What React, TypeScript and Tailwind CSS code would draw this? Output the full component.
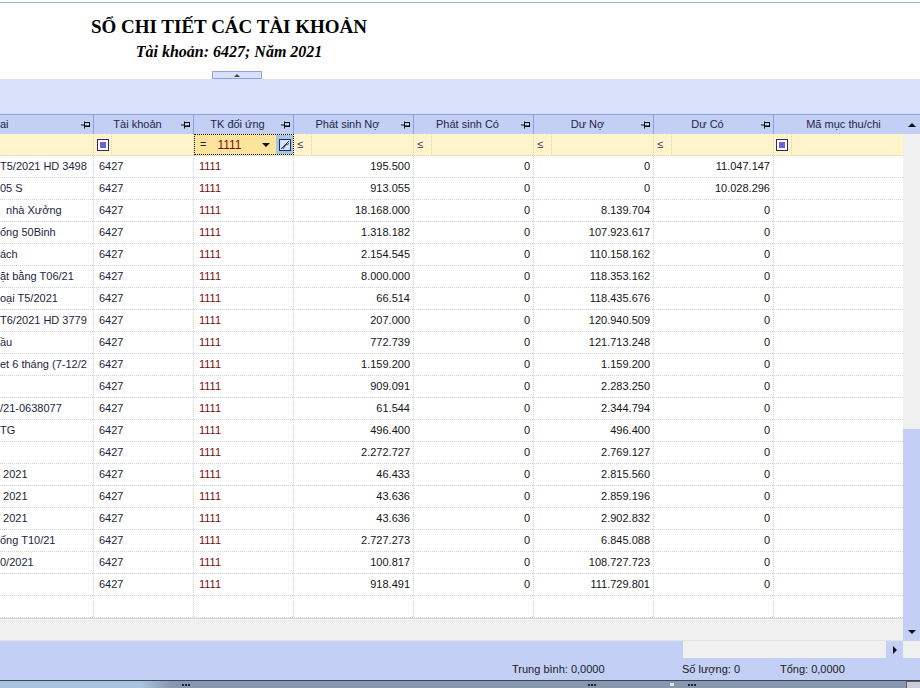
import React from 'react'

type Line = [string, string, string, string, string]

const rows: Line[] = [
  ['T5/2021 HD 3498', '195.500', '0', '0', '11.047.147'],
  ['05 S', '913.055', '0', '0', '10.028.296'],
  ['  nhà Xưởng', '18.168.000', '0', '8.139.704', '0'],
  ['ống 50Binh', '1.318.182', '0', '107.923.617', '0'],
  ['ách', '2.154.545', '0', '110.158.162', '0'],
  ['ặt bằng T06/21', '8.000.000', '0', '118.353.162', '0'],
  ['oại T5/2021', '66.514', '0', '118.435.676', '0'],
  ['T6/2021 HD 3779', '207.000', '0', '120.940.509', '0'],
  ['ầu', '772.739', '0', '121.713.248', '0'],
  ['et 6 tháng (7-12/2', '1.159.200', '0', '1.159.200', '0'],
  ['', '909.091', '0', '2.283.250', '0'],
  ['/21-0638077', '61.544', '0', '2.344.794', '0'],
  ['TG', '496.400', '0', '496.400', '0'],
  ['', '2.272.727', '0', '2.769.127', '0'],
  [' 2021', '46.433', '0', '2.815.560', '0'],
  [' 2021', '43.636', '0', '2.859.196', '0'],
  [' 2021', '43.636', '0', '2.902.832', '0'],
  ['ống T10/21', '2.727.273', '0', '6.845.088', '0'],
  ['0/2021', '100.817', '0', '108.727.723', '0'],
  ['', '918.491', '0', '111.729.801', '0'],
]

function PinIcon() {
  return (
    <svg width="10" height="8" viewBox="0 0 10 8" className="shrink-0">
      <path d="M0 4H3M3.5 0.5V7.5" stroke="#111" strokeWidth="1" fill="none" />
      <rect x="3.5" y="1.5" width="5" height="4" stroke="#111" strokeWidth="1" fill="none" />
      <path d="M4 5H9" stroke="#111" strokeWidth="1.2" />
    </svg>
  )
}

function CheckIcon() {
  return (
    <div className="w-[12px] h-[12px] border border-[#2a2a6a] bg-white p-[2px]">
      <div className="w-full h-full bg-[#6a62d6]" />
    </div>
  )
}

function ClearFilterIcon() {
  return (
    <svg width="12" height="12" viewBox="0 0 12 12">
      <rect x="0.5" y="0.5" width="11" height="11" fill="#d6e4f6" stroke="#1e2a6a" />
      <path d="M2 10L10 2" stroke="#1e2a6a" strokeWidth="1" />
      <path d="M4 10Q6 5 10 4.5" stroke="#1e2a6a" strokeWidth="1" fill="none" />
    </svg>
  )
}

function Tri({ dir }: { dir: 'up' | 'down' | 'right' }) {
  if (dir === 'up') return <div className="w-0 h-0 border-x-[4px] border-x-transparent border-b-[4px] border-b-[#111]" />
  if (dir === 'down') return <div className="w-0 h-0 border-x-[4px] border-x-transparent border-t-[4px] border-t-[#111]" />
  return <div className="w-0 h-0 border-y-[4px] border-y-transparent border-l-[4px] border-l-[#111]" />
}

function Grip() {
  return (
    <div className="flex gap-[1px]">
      <div className="w-[2px] h-[2px] bg-[#1c2230]" />
      <div className="w-[2px] h-[2px] bg-[#1c2230]" />
      <div className="w-[2px] h-[2px] bg-[#1c2230]" />
    </div>
  )
}

const dot = 'border-r border-dotted border-[#d3d3d3]'

function HeadCell({ w, label, pin = true, extra = '' }: { w: string; label: string; pin?: boolean; extra?: string }) {
  return (
    <div className={`${w} shrink-0 flex items-center border-r border-[#8da1e3] pr-[2px] ${extra}`}>
      <span className="flex-1 text-center whitespace-nowrap">{label}</span>
      {pin && <PinIcon />}
    </div>
  )
}

function OpCell({ w }: { w: string }) {
  return (
    <div className={`${w} shrink-0 flex border-r border-dotted border-[#dcd6bc]`}>
      <div className="w-[18px] flex items-center pl-[3px] text-[#2b2b6b] border-r border-dotted border-[#dcd6bc]">≤</div>
    </div>
  )
}

function DataRow({ line }: { line?: Line }) {
  const [desc, ps, co, no, dc] = line ?? ['', '', '', '', '']
  const has = !!line
  return (
    <div className="flex h-[22px] border-b border-dotted border-[#d3d3d3]">
      <div className={`w-[94px] shrink-0 overflow-hidden whitespace-pre flex items-center text-[#1c1f3e] ${dot}`}>{desc}</div>
      <div className={`w-[100px] shrink-0 flex items-center pl-[5px] text-[#1c1f3e] ${dot}`}>{has ? '6427' : ''}</div>
      <div className={`w-[100px] shrink-0 flex items-center pl-[5px] text-[#7d0a0a] ${dot}`}>{has ? '1111' : ''}</div>
      <div className={`w-[120px] shrink-0 flex items-center justify-end pr-[3px] text-[#141414] ${dot}`}>{ps}</div>
      <div className={`w-[120px] shrink-0 flex items-center justify-end pr-[3px] text-[#141414] ${dot}`}>{co}</div>
      <div className={`w-[120px] shrink-0 flex items-center justify-end pr-[3px] text-[#141414] ${dot}`}>{no}</div>
      <div className={`w-[120px] shrink-0 flex items-center justify-end pr-[3px] text-[#141414] ${dot}`}>{dc}</div>
      <div className="flex-1" />
    </div>
  )
}

export default function App() {
  return (
    <div className="w-[920px] h-[688px] overflow-hidden bg-white flex flex-col font-['Liberation_Sans',Arial,sans-serif] text-[11px] leading-none">
      <div className="h-[2px] shrink-0" />
      <div className="h-px shrink-0 bg-[#9eafe8]" />

      <div className="h-[68px] shrink-0 w-[458px] pt-[12px] text-center text-black font-['Liberation_Serif','Times_New_Roman',serif]">
        <div className="text-[19px] leading-[24px] font-bold">SỔ CHI TIẾT CÁC TÀI KHOẢN</div>
        <div className="mt-[3px] text-[16px] leading-[20px] font-bold italic">Tài khoản: 6427; Năm 2021</div>
      </div>

      <div className="h-[8px] shrink-0 flex">
        <div className="ml-[212px] w-[50px] h-[8px] border border-[#8ea2e4] bg-[#d9e1f9] flex items-center justify-center">
          <div className="w-0 h-0 border-x-[3px] border-x-transparent border-b-[3px] border-b-[#444]" />
        </div>
      </div>

      <div className="h-[35px] shrink-0 bg-[#d9e1fa]" />

      <div className="h-[527px] shrink-0 flex">
        <div className="w-[903px] shrink-0 flex flex-col">
          <div className="flex h-[20px] shrink-0 border-t border-[#8da1e3] bg-[#c3cff5] text-[#1f1f4d]">
            <div className="w-[94px] shrink-0 flex items-center border-r border-[#8da1e3] pr-[2px]">
              <span className="flex-1">ai</span>
              <PinIcon />
            </div>
            <HeadCell w="w-[100px]" label="Tài khoản" />
            <HeadCell w="w-[100px]" label="TK đối ứng" />
            <HeadCell w="w-[120px]" label="Phát sinh Nợ" />
            <HeadCell w="w-[120px]" label="Phát sinh Có" />
            <HeadCell w="w-[120px]" label="Dư Nợ" />
            <HeadCell w="w-[120px]" label="Dư Có" />
            <div className="flex-1 flex items-center pl-[10px]">
              <span className="flex-1 text-center whitespace-nowrap">Mã mục thu/chi</span>
            </div>
          </div>

          <div className="flex h-[22px] shrink-0 bg-[#fff4cc] border-b border-dotted border-[#d8d3bd]">
            <div className="w-[94px] shrink-0 border-r border-dotted border-[#dcd6bc]" />
            <div className="w-[100px] shrink-0 flex border-r border-dotted border-[#dcd6bc]">
              <div className="w-[18px] flex items-center pl-[3px] border-r border-dotted border-[#dcd6bc]">
                <CheckIcon />
              </div>
            </div>
            <div className="w-[100px] shrink-0 flex items-stretch border border-dotted border-[#111] bg-[#fde49c]">
              <span className="flex items-center pl-[5px] text-[#222]">=</span>
              <span className="flex items-center pl-[11px] text-[#7d0a0a] text-[12px]">1111</span>
              <div className="flex-1 flex items-center justify-end pr-[6px]">
                <Tri dir="down" />
              </div>
              <div className="w-[17px] bg-[#a8c4e6] flex items-center justify-center">
                <ClearFilterIcon />
              </div>
            </div>
            <OpCell w="w-[120px]" />
            <OpCell w="w-[120px]" />
            <OpCell w="w-[120px]" />
            <OpCell w="w-[120px]" />
            <div className="flex-1 flex">
              <div className="w-[18px] flex items-center pl-[2px] border-r border-dotted border-[#dcd6bc]">
                <CheckIcon />
              </div>
            </div>
          </div>

          {rows.map((r, i) => (
            <DataRow key={i} line={r} />
          ))}
          <DataRow />

          <div className="flex-1 bg-[#f0f0f0] border-t border-[#dadada] border-b border-b-[#e2e2e2]" />
        </div>

        <div className="w-[17px] shrink-0 flex flex-col">
          <div className="h-[20px] shrink-0 bg-[#c3cff5] border-t border-[#8da1e3] flex items-center justify-center">
            <Tri dir="up" />
          </div>
          <div className="h-[295px] shrink-0 bg-[#f0f0f0]" />
          <div className="h-[194px] shrink-0 bg-[#c3cff5]" />
          <div className="flex-1 bg-[#c3cff5] flex items-center justify-center">
            <Tri dir="down" />
          </div>
        </div>
      </div>

      <div className="h-[17px] shrink-0 flex">
        <div className="w-[683px] shrink-0 bg-[#c3cff5]" />
        <div className="w-[203px] shrink-0 bg-[#f0f0f0]" />
        <div className="w-[17px] shrink-0 bg-[#c3cff5] flex items-center justify-center">
          <Tri dir="right" />
        </div>
        <div className="flex-1 bg-[#f0f0f0]" />
      </div>

      <div className="h-[22px] shrink-0 bg-[#c3cff5] flex items-center pl-[512px] text-[#1a1a1a] whitespace-nowrap">
        <span className="w-[170px] shrink-0">Trung bình: 0,0000</span>
        <span className="w-[98px] shrink-0">Số lượng: 0</span>
        <span>Tổng: 0,0000</span>
      </div>

      <div className="h-px shrink-0 bg-[#3d4554]" />
      <div className="h-[7px] shrink-0 flex items-center bg-[linear-gradient(to_right,#aac3df_0px,#aac3df_140px,#8797af_172px,#8797af_100%)]">
        <div className="ml-[182px]"><Grip /></div>
        <div className="ml-[398px]"><Grip /></div>
        <div className="ml-[74px] w-[4px] h-[3px] bg-[#dfe6f0]" />
        <div className="ml-[14px]"><Grip /></div>
        <div className="ml-auto w-[14px] h-full bg-[#c9cdd5] border-l border-t border-[#59606e]" />
      </div>
    </div>
  )
}
